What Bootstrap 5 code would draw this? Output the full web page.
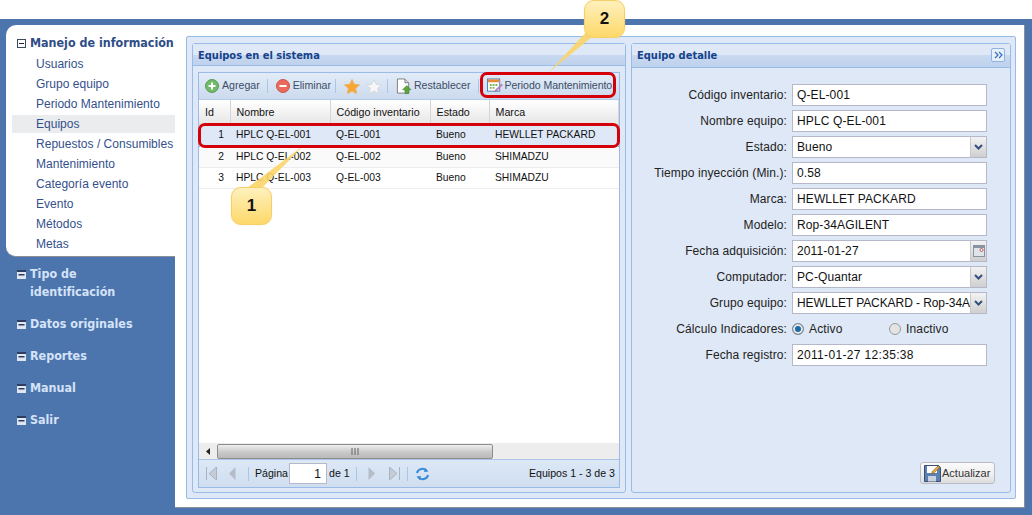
<!DOCTYPE html>
<html lang="es"><head><meta charset="utf-8"><title>Equipos</title>
<link href="https://cdn.jsdelivr.net/npm/bootstrap@5.3.0/dist/css/bootstrap.min.css" rel="stylesheet">
<style>
html,body{margin:0;height:515px;overflow:hidden;background:#fff}
body{font-family:"Liberation Sans",Arial,sans-serif;font-size:11px;color:#111}
.stage{position:relative;width:1032px;height:515px;padding-top:19px}
.shell{background:#4c75ae;height:496px;display:flex;padding:6px 8px 7px 6px}
.side{width:169px;flex:none;color:#d5e3f7}
.side-open{background:#fff;border-radius:10px 0 0 10px;border-bottom:1px solid #8a8f98;height:232px;padding:7px 0 0 6px;margin-bottom:8px}
.mhead{font:bold 12.400px/22px "DejaVu Sans Condensed","DejaVu Sans",sans-serif;display:flex;gap:4px;padding-left:5px}
.mhead .lbl{width:120px}
.mhead svg{flex:none;margin-top:7px}
.side-open .mhead{color:#2f4d86}
.side-rest .mhead{line-height:18px;padding-left:11px;margin-bottom:14px}
.side-rest .mhead svg{margin-top:5px}
.subm{list-style:none;margin:0;padding:0;font-size:12px;color:#34508c}
.subm li{height:20px;line-height:20px;padding-left:24px;white-space:nowrap;letter-spacing:.02px}
.subm li.on{background:#ebecee;height:18px;line-height:18px;margin:1px 0}
.mainp{flex:1;background:#fff;border-right:1px solid #8a8f98;border-bottom:1px solid #8a8f98;padding:11px 8px 8px 11px}
.outer{background:#dfe8f6;border:1px solid #99bbe8;height:463px;padding:6px 4px 5px 5px;display:flex;gap:5px;border-radius:2px}
.pnl{border:1px solid #99bbe8;border-radius:3px;height:450px;display:flex;flex-direction:column;background:#dfe8f6}
.pl{width:434px}.pr{width:380px}
.phead{flex:none;background:linear-gradient(#dfe8f6 0,#dfe8f6 50%,#c8d9f0 50%,#bfd2ec 100%);border-bottom:1px solid #99bbe8;font:bold 11px/23px "DejaVu Sans Condensed","DejaVu Sans",sans-serif;color:#15428b;padding-left:5px;display:flex;justify-content:space-between}
.pl .phead{height:22px}.pr .phead{height:24px;padding-right:5px}
.pbody{flex:1;padding:6px 5px 5px}
.gpanel{border:1px solid #99bbe8;height:416px;display:flex;flex-direction:column;background:#fff}
.tbar{height:27px;flex:none;background:linear-gradient(#e3ecf8,#cbdaee);border-bottom:1px solid #b4cbe8;display:flex;align-items:center;padding-left:6px;color:#3c4d66;white-space:nowrap;font-size:10.6px}
.tbtn{display:flex;align-items:center;gap:3px}
.tbtn.t2{gap:2px}
.sep{width:1px;height:14px;background:#a9c5e8;margin:0 8px 0 6px;flex:none}
.sep.s1{margin-left:7px}
.sep.s2{margin-left:4px}
.sep.s3{margin-left:7px}
.sep.s4{margin-left:5px}
.star2{margin-left:6px}
.lab-periodo{letter-spacing:-.06px}
.gridt{width:100%;table-layout:fixed;border-collapse:collapse;margin:0}
.gridt th{height:24px;font-weight:400;font-size:10.7px;padding:0 0 0 6px;background:linear-gradient(#fff,#f4f4f4 45%,#e6e6e6);border-right:1px solid #d5d5d5;border-bottom:1px solid #d0d0d0}
.gridt td{padding:0 0 0 6px;font-size:10.3px;border-bottom:1px solid #ededed;height:21px;background:#fff}
.gridt tr.alt td{background:#fafafa}
.gridt tr.sel td{background:#dfe8f6;border-bottom:1px dotted #8db2e3;height:22px}
.gridt td.num{text-align:right;padding-right:6px}
.c1{width:31px}.c2{width:100px}.c3{width:100px}.c4{width:59px}
.gspace{flex:1}
.hscroll{height:16px;flex:none;background:#ededed;display:flex;align-items:center;padding-left:7px;gap:6px}
.thumb{width:276px;height:15px;border:1px solid #8d8d8d;border-radius:2px;background:linear-gradient(#eee,#c9c9c9 55%,#b9b9b9);display:flex;align-items:center;justify-content:center}
.pager{height:28px;flex:none;background:linear-gradient(#dde8f6,#cfdef0);border-top:1px solid #a9c5e8;display:flex;align-items:center;padding:0 4px 0 7px;white-space:nowrap;font-size:10.6px}
.pager .sep{margin:0 6px}
.pager .sep.pg2{margin-left:12px}
.pager .sep.pg3{margin-left:7px}
.pg1{margin-left:12px}.pg4{margin-left:5px}.pg5{margin-left:14px}
.pager .ref{margin-left:1px}
.pginp{width:38px;height:21px;border:1px solid #b5b8c8;background:#fff;text-align:right;padding:0 5px;font-size:12px;margin:0 2px 0 1px;color:#111}
.fbody{flex:1;padding:16px 22px 8px 0;position:relative;display:flex;flex-direction:column}
.frow{display:flex;align-items:center;height:22px;margin-bottom:4px}
.frow label,.frow .flab{width:155px;flex:none;text-align:right;font-size:12px;color:#222;margin:0 5px 0 0;letter-spacing:.1px;white-space:nowrap}
.fld.form-control{width:195px;height:22px;background:#fff;letter-spacing:.12px;min-height:0;line-height:18px;font-size:12px;color:#111;padding:1px 4px;border:1px solid #b5b8c8;border-radius:0}
.fld.tight.form-control{letter-spacing:-.08px;padding-right:0}
.fld.wide.form-control{letter-spacing:.33px}
.combo{position:relative;width:195px}
.trig{position:absolute;right:0;top:0;width:17px;height:22px;background:linear-gradient(#f3f3f3,#cfcfcf);border:1px solid #b5b8c8;border-left-color:#c9c9c9;display:flex;align-items:center;justify-content:center}
.radios{display:flex;width:195px;font-size:12px;color:#222;align-items:center}
.radioitem{width:97px;display:flex;align-items:center;gap:5px;letter-spacing:.15px}
.form-check-input.rad{width:12px;height:12px;margin:0;background-color:#e4e4e4;border-color:#999;float:none;flex:none}
.form-check-input.rad:checked{background-color:#1a6aa8;border-color:#8a8a8a;border-width:1px;background-image:none;box-shadow:inset 0 0 0 2px #e8e8e8}
.factions{margin-top:auto;display:flex;justify-content:flex-end;margin-right:-7px}
.btn.savebtn{height:22px;width:75px;padding:0 0 0 3px;font-size:11px;color:#333;border:1px solid #b9bcc4;border-radius:3px;background:linear-gradient(#fafafa,#eee 60%,#dcdcdc);display:flex;align-items:center;gap:1px}
.expbtn{width:14px;height:14px;border:1px solid #8db2e3;background:#e8f0fb;border-radius:2px;margin-top:4px;display:flex;align-items:center;justify-content:center}
.redbox{position:absolute;border:3px solid #d4000a;border-radius:7px;pointer-events:none}
.rb1{left:198px;top:123px;width:422px;height:25px}
.rb2{left:480px;top:72px;width:136px;height:26px}
.callout{position:absolute;width:41px;height:38px;border:1px solid #f7cf68;border-radius:10px;background:linear-gradient(#fff1bd,#fdd86a);font:bold 17px/36px "Liberation Sans",sans-serif;color:#111;text-align:center;box-shadow:0 0 1px #f7cf68}
.cl1{left:231px;top:187px}.cl2{left:584px;top:0}
.wedges{position:absolute;left:0;top:0;pointer-events:none}
</style></head><body>
<div class="stage">
 <div class="shell">
  <aside class="side">
   <div class="side-open">
    <div class="mhead"><svg width="9" height="9" viewBox="0 0 9 9"><rect x=".5" y=".5" width="8" height="8" fill="#fff" stroke="#3c4a60"/><path d="M2 4.500h5" stroke="#223"/></svg><span class="lbl text-nowrap">Manejo de información</span></div>
    <ul class="subm">
     <li>Usuarios</li><li>Grupo equipo</li><li>Periodo Mantenimiento</li><li class="on">Equipos</li><li>Repuestos / Consumibles</li><li>Mantenimiento</li><li>Categoría evento</li><li>Evento</li><li>Métodos</li><li>Metas</li>
    </ul>
   </div>
   <div class="side-rest">
    <div class="mhead"><svg width="9" height="9" viewBox="0 0 9 9"><rect width="9" height="9" fill="#dfe6f2"/><path d="M0 0h9v2H0zM1.500 4h6v1.500h-6z" fill="#2c3f60"/></svg><span class="lbl">Tipo de identificación</span></div>
    <div class="mhead"><svg width="9" height="9" viewBox="0 0 9 9"><rect width="9" height="9" fill="#dfe6f2"/><path d="M0 0h9v2H0zM1.500 4h6v1.500h-6z" fill="#2c3f60"/></svg><span class="lbl">Datos originales</span></div>
    <div class="mhead"><svg width="9" height="9" viewBox="0 0 9 9"><rect width="9" height="9" fill="#dfe6f2"/><path d="M0 0h9v2H0zM1.500 4h6v1.500h-6z" fill="#2c3f60"/></svg><span class="lbl">Reportes</span></div>
    <div class="mhead"><svg width="9" height="9" viewBox="0 0 9 9"><rect width="9" height="9" fill="#dfe6f2"/><path d="M0 0h9v2H0zM1.500 4h6v1.500h-6z" fill="#2c3f60"/></svg><span class="lbl">Manual</span></div>
    <div class="mhead"><svg width="9" height="9" viewBox="0 0 9 9"><rect width="9" height="9" fill="#dfe6f2"/><path d="M0 0h9v2H0zM1.500 4h6v1.500h-6z" fill="#2c3f60"/></svg><span class="lbl">Salir</span></div>
   </div>
  </aside>
  <main class="mainp">
   <div class="outer">
    <section class="pnl pl">
     <div class="phead">Equipos en el sistema</div>
     <div class="pbody">
      <div class="gpanel">
       <div class="tbar">
        <span class="tbtn"><svg width="14" height="14" viewBox="0 0 14 14"><circle cx="7" cy="7" r="6.500" fill="#6fbb6a" stroke="#5c9a58"/><path d="M7 3.500v7M3.500 7h7" stroke="#fff" stroke-width="2"/></svg>Agregar</span>
        <span class="sep s1"></span>
        <span class="tbtn"><svg width="14" height="14" viewBox="0 0 14 14"><circle cx="7" cy="7" r="6.500" fill="#ec6a5c" stroke="#c25a52"/><path d="M3.500 7h7" stroke="#fff" stroke-width="2"/></svg>Eliminar</span>
        <span class="sep s2"></span>
        <svg width="16" height="15" viewBox="0 0 16 15"><path d="M8 .5l2.200 4.800 5.300.6-3.900 3.600 1.100 5.200L8 12.100l-4.700 2.600 1.100-5.200L.5 5.900l5.300-.6z" fill="#f7a632" stroke="#e8b46a"/></svg>
        <svg class="star2" width="16" height="15" viewBox="0 0 16 15"><path d="M8 .5l2.200 4.800 5.300.6-3.900 3.600 1.100 5.200L8 12.100l-4.700 2.600 1.100-5.200L.5 5.900l5.300-.6z" fill="#f6f6f6" stroke="#d4d8de"/></svg>
        <span class="sep s4"></span>
        <span class="tbtn t2"><svg width="16" height="17" viewBox="0 0 17 17"><path d="M1.500.5h8l4 4v11h-12z" fill="#fff" stroke="#7c7c7c"/><path d="M9.500.5v4h4" fill="#ddd" stroke="#7c7c7c"/><path d="M11.500 7.500l4.500 4.500h-2.500v4h-4v-4H7z" fill="#5fa53e" stroke="#3f7f2a" stroke-width=".6"/></svg>Restablecer</span>
        <span class="sep s3"></span>
        <span class="tbtn t2"><svg width="16" height="16" viewBox="0 0 17 16"><rect x=".5" y=".5" width="13" height="13" fill="#fff" stroke="#4a7fb5"/><rect x="1" y="1" width="12" height="3" fill="#e8883a"/><path d="M3 6h2v2H3zM6 6h2v2H6zM9 6h2v2H9zM3 9h2v2H3zM6 9h2v2H6z" fill="#7cb552"/><path d="M15.500 6l1 1-6 6-2 .8.800-2z" fill="#c78ad2" stroke="#8c5c96" stroke-width=".5"/></svg><span class="lab-periodo">Periodo Mantenimiento</span></span>
       </div>
       <table class="gridt">
        <thead><tr><th class="c1">Id</th><th class="c2">Nombre</th><th class="c3">Código inventario</th><th class="c4">Estado</th><th>Marca</th></tr></thead>
        <tbody>
         <tr class="sel"><td class="num">1</td><td>HPLC Q-EL-001</td><td>Q-EL-001</td><td>Bueno</td><td>HEWLLET PACKARD</td></tr>
         <tr class="alt"><td class="num">2</td><td>HPLC Q-EL-002</td><td>Q-EL-002</td><td>Bueno</td><td>SHIMADZU</td></tr>
         <tr><td class="num">3</td><td>HPLC Q-EL-003</td><td>Q-EL-003</td><td>Bueno</td><td>SHIMADZU</td></tr>
        </tbody>
       </table>
       <div class="gspace"></div>
       <div class="hscroll"><svg width="5" height="7" viewBox="0 0 5 7"><path d="M4 0v7L0 3.500z" fill="#222"/></svg><div class="thumb"><svg width="9" height="7" viewBox="0 0 9 7"><path d="M1 0v7M4 0v7M7 0v7" stroke="#666"/></svg></div></div>
       <div class="pager">
        <svg width="11" height="13" viewBox="0 0 11 13"><path d="M.5 0v13M10.500 0v13L3 6.500z" stroke="#aab4c0" fill="#c5ccd6"/></svg>
        <svg class="pg1" width="7" height="13" viewBox="0 0 7 13"><path d="M6.500 0v13L0 6.500z" fill="#b4bcc8"/></svg>
        <span class="sep pg2"></span><span>Página</span><input class="pginp" value="1" aria-label="Página"><span>de 1</span><span class="sep"></span>
        <svg class="pg4" width="7" height="13" viewBox="0 0 7 13"><path d="M.5 0v13L7 6.500z" fill="#b4bcc8"/></svg>
        <svg class="pg5" width="11" height="13" viewBox="0 0 11 13"><path d="M10.500 0v13M.5 0v13L8 6.500z" stroke="#aab4c0" fill="#c5ccd6"/></svg>
        <span class="sep pg3"></span>
        <svg class="ref" width="15" height="14" viewBox="0 0 15 14" fill="none" stroke="#3a8ad8" stroke-width="2"><path d="M2 6a5.500 5 0 0 1 10-2"/><path d="M10 1l3.500 3.500L9 5z" fill="#3a8ad8" stroke="none"/><path d="M13 8a5.500 5 0 0 1-10 2"/><path d="M5 13L1.500 9.500 6 9z" fill="#3a8ad8" stroke="none"/></svg>
        <span class="ms-auto">Equipos 1 - 3 de 3</span>
       </div>
      </div>
     </div>
    </section>
    <section class="pnl pr">
     <div class="phead">Equipo detalle<span class="expbtn"><svg width="9" height="8" viewBox="0 0 9 8" fill="none" stroke="#2f6fc0" stroke-width="1.200"><path d="M1 1l3 3-3 3M5 1l3 3-3 3"/></svg></span></div>
     <form class="fbody">
      <div class="frow"><label for="f1">Código inventario:</label><input id="f1" class="form-control fld" value="Q-EL-001"></div>
      <div class="frow"><label for="f2">Nombre equipo:</label><input id="f2" class="form-control fld" value="HPLC Q-EL-001"></div>
      <div class="frow"><label for="f3">Estado:</label><div class="combo"><input id="f3" class="form-control fld" value="Bueno"><span class="trig"><svg width="9" height="6" viewBox="0 0 9 6"><path d="M1 1l3.500 3.500L8 1" fill="none" stroke="#33507f" stroke-width="2"/></svg></span></div></div>
      <div class="frow"><label for="f4">Tiempo inyección (Min.):</label><input id="f4" class="form-control fld" value="0.58"></div>
      <div class="frow"><label for="f5">Marca:</label><input id="f5" class="form-control fld" value="HEWLLET PACKARD"></div>
      <div class="frow"><label for="f6">Modelo:</label><input id="f6" class="form-control fld" value="Rop-34AGILENT"></div>
      <div class="frow"><label for="f7">Fecha adquisición:</label><div class="combo"><input id="f7" class="form-control fld" value="2011-01-27"><span class="trig"><svg width="12" height="12" viewBox="0 0 12 12"><rect x=".5" y=".5" width="11" height="11" fill="#dfe3ea" stroke="#8a93a3"/><rect x="1" y="1" width="10" height="2" fill="#8a93a3"/><circle cx="8.500" cy="5" r="1.500" fill="#fff" stroke="#b33" stroke-width=".8"/></svg></span></div></div>
      <div class="frow"><label for="f8">Computador:</label><div class="combo"><input id="f8" class="form-control fld" value="PC-Quantar"><span class="trig"><svg width="9" height="6" viewBox="0 0 9 6"><path d="M1 1l3.500 3.500L8 1" fill="none" stroke="#33507f" stroke-width="2"/></svg></span></div></div>
      <div class="frow"><label for="f9">Grupo equipo:</label><div class="combo"><input id="f9" class="form-control fld tight" value="HEWLLET PACKARD - Rop-34A"><span class="trig"><svg width="9" height="6" viewBox="0 0 9 6"><path d="M1 1l3.500 3.500L8 1" fill="none" stroke="#33507f" stroke-width="2"/></svg></span></div></div>
      <div class="frow"><span class="flab">Cálculo Indicadores:</span><div class="radios"><span class="radioitem"><input class="form-check-input rad" type="radio" name="ci" checked aria-label="Activo">Activo</span><span class="radioitem"><input class="form-check-input rad" type="radio" name="ci" aria-label="Inactivo">Inactivo</span></div></div>
      <div class="frow"><label for="f10">Fecha registro:</label><input id="f10" class="form-control fld wide" value="2011-01-27 12:35:38"></div>
      <div class="factions"><button type="button" class="btn savebtn"><svg width="17" height="17" viewBox="0 0 17 17"><path d="M.5.500h14l2 2v14H.5z" fill="#5b7fb0" stroke="#3a4f70"/><rect x="3" y="1" width="10" height="7" fill="#fff"/><rect x="4" y="11" width="8" height="5.500" fill="#c9d2de"/><path d="M14 1l2 1-6 6-2.500.800.800-2.500z" fill="#e8a73a" stroke="#7a5a20" stroke-width=".5"/></svg>Actualizar</button></div>
     </form>
    </section>
   </div>
  </main>
 </div>
 <svg class="wedges" width="1032" height="515" viewBox="0 0 1032 515"><path d="M303 146L247 188 262 188z" fill="#fbd469" opacity=".9"/><path d="M549 72L588 30 592 37z" fill="#fbd469" opacity=".9"/></svg>
 <div class="redbox rb1"></div>
 <div class="redbox rb2"></div>
 <div class="callout cl1">1</div>
 <div class="callout cl2">2</div>
</div>
<script src="https://cdn.jsdelivr.net/npm/bootstrap@5.3.0/dist/js/bootstrap.bundle.min.js"></script>
</body></html>
